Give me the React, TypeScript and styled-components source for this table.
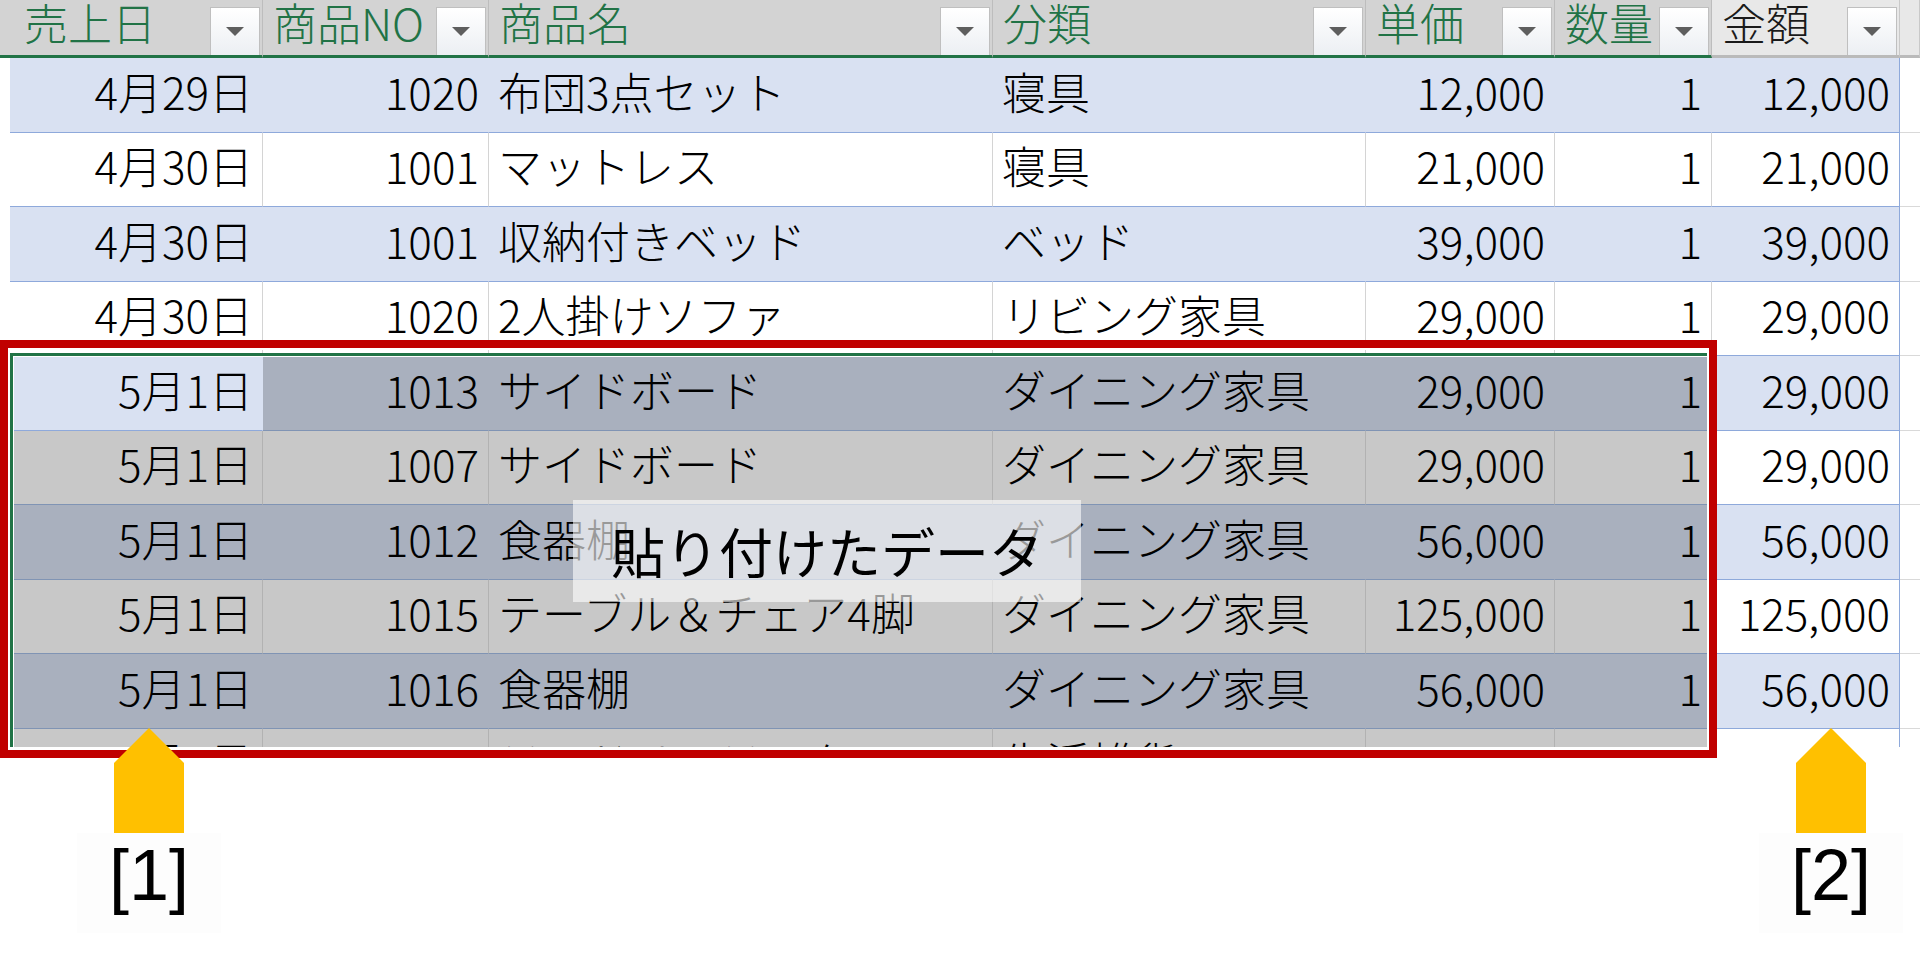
import React from "react";
import styled, { createGlobalStyle } from "styled-components";

const GlobalStyle = createGlobalStyle`
  html, body { margin: 0; padding: 0; background: #ffffff; }
  body { font-family: "Noto Sans CJK JP", "Noto Sans", sans-serif; font-weight: 300; }
  *, *::before, *::after { box-sizing: border-box; }
`;

const COLS = "10px 253px 226px 504px 373px 189px 157px 188px 20px";

type Tone = "band" | "plain" | "bandSel" | "plainSel";

const toneBg: Record<Tone, string> = {
  band: "#d9e1f2",
  plain: "#ffffff",
  bandSel: "#a9b0be",
  plainSel: "#c8c8c8",
};
const toneV: Record<Tone, string> = {
  band: "#d9e1f2",
  plain: "#d4d4d4",
  bandSel: "#a9b0be",
  plainSel: "#b2b2b2",
};

const Page = styled.div`
  position: relative;
  width: 1920px;
  height: 962px;
  overflow: hidden;
  background: #ffffff;
`;

const Sheet = styled.div`
  height: 747px;
  overflow: hidden;
`;

const HeaderRow = styled.div`
  display: grid;
  grid-template-columns: ${COLS};
  height: 58px;
`;

const HeaderCell = styled.div<{ $selected?: boolean; $pad?: number }>`
  display: flex;
  justify-content: space-between;
  align-items: flex-start;
  padding-left: ${(p) => p.$pad ?? 10}px;
  background: ${(p) => (p.$selected ? "#d3d3d3" : "#e8e8e8")};
  border-right: 1px solid ${(p) => (p.$selected ? "#bdbdbd" : "#c9c9c9")};
  border-bottom: 3px solid ${(p) => (p.$selected ? "#217346" : "#bababa")};
  color: ${(p) => (p.$selected ? "#217346" : "#1a1a1a")};
  font-size: 44px;
  line-height: 1;
  white-space: nowrap;
`;

const HeaderLabel = styled.span`
  margin-top: 0;
`;

const FilterButton = styled.span`
  flex: none;
  align-self: flex-end;
  width: 50px;
  height: 48px;
  margin-right: 2px;
  border: 1px solid #bfbfbf;
  border-bottom: none;
  background: linear-gradient(#ffffff, #eceff3);
  display: flex;
  align-items: center;
  justify-content: center;
  &::after {
    content: "";
    border-left: 9px solid transparent;
    border-right: 9px solid transparent;
    border-top: 9px solid #5e5e5e;
  }
`;

const Row = styled.div`
  display: grid;
  grid-template-columns: ${COLS};
  height: 74.5px;
`;

const Gutter = styled.div`
  background: #ffffff;
`;

const Filler = styled.div`
  background: #ffffff;
  border-bottom: 1px solid #d9d9d9;
`;

const Cell = styled.div<{ $tone: Tone; $right?: boolean; $edge?: boolean }>`
  display: flex;
  align-items: center;
  justify-content: ${(p) => (p.$right ? "flex-end" : "flex-start")};
  padding: 0 9px 8px;
  background: ${(p) => toneBg[p.$tone]};
  border-bottom: 1px solid
    ${(p) => (p.$tone === "bandSel" || p.$tone === "plainSel" ? "#8094b4" : "#8ea9db")};
  border-right: 1px solid ${(p) => (p.$edge ? "#8ea9db" : toneV[p.$tone])};
  color: #000000;
  font-size: 44px;
  line-height: 1;
  white-space: nowrap;
  overflow: hidden;
`;

const RedFrame = styled.div`
  position: absolute;
  left: 0;
  top: 340px;
  width: 1717px;
  height: 418px;
  border: 8px solid #c00000;
  box-shadow: inset 0 0 0 2px #ffffff;
  pointer-events: none;
`;

const SelectionEdge = styled.div`
  position: absolute;
  left: 10px;
  top: 353px;
  width: 1700px;
  height: 394px;
  border-top: 3px solid #217346;
  border-left: 3px solid #217346;
  box-shadow: inset 1px 1px 0 #ffffff;
  pointer-events: none;
`;

const PasteLabel = styled.div`
  position: absolute;
  left: 573px;
  top: 500px;
  width: 508px;
  height: 102px;
  display: flex;
  align-items: center;
  justify-content: center;
  background: rgba(255, 255, 255, 0.6);
  color: #000000;
  font-size: 54px;
  font-weight: 400;
  line-height: 1;
  white-space: nowrap;
`;

const Callout = styled.div<{ $left: number }>`
  position: absolute;
  top: 728px;
  left: ${(p) => p.$left}px;
  width: 144px;
  display: flex;
  flex-direction: column;
  align-items: center;
`;

const CalloutLabel = styled.div`
  width: 144px;
  height: 100px;
  padding-top: 6px;
  background: #fdfdfd;
  text-align: center;
  font-family: "Liberation Sans", Arial, sans-serif;
  font-weight: 400;
  font-size: 72px;
  line-height: 1;
  color: #000000;
`;

const Arrow = () => (
  <svg width="70" height="105" viewBox="0 0 70 105" style={{ display: "block" }}>
    <polygon points="35,0 70,35 70,105 0,105 0,35" fill="#ffc000" />
  </svg>
);

type RowData = [string, string, string, string, string, string, string];

const rows: RowData[] = [
  ["4月29日", "1020", "布団3点セット", "寝具", "12,000", "1", "12,000"],
  ["4月30日", "1001", "マットレス", "寝具", "21,000", "1", "21,000"],
  ["4月30日", "1001", "収納付きベッド", "ベッド", "39,000", "1", "39,000"],
  ["4月30日", "1020", "2人掛けソファ", "リビング家具", "29,000", "1", "29,000"],
  ["5月1日", "1013", "サイドボード", "ダイニング家具", "29,000", "1", "29,000"],
  ["5月1日", "1007", "サイドボード", "ダイニング家具", "29,000", "1", "29,000"],
  ["5月1日", "1012", "食器棚", "ダイニング家具", "56,000", "1", "56,000"],
  ["5月1日", "1015", "テーブル＆チェア4脚", "ダイニング家具", "125,000", "1", "125,000"],
  ["5月1日", "1016", "食器棚", "ダイニング家具", "56,000", "1", "56,000"],
  ["5月1日", "1009", "ランドリーラック", "生活雑貨", "8,000", "1", "8,000"],
];

const headers = ["売上日", "商品NO", "商品名", "分類", "単価", "数量", "金額"];
const rightAligned = [true, true, false, false, true, true, true];

export default function App() {
  return (
    <Page>
      <GlobalStyle />
      <Sheet>
        <HeaderRow>
          <HeaderCell $selected />
          {headers.map((h, i) => (
            <HeaderCell key={h} $selected={i < 6} $pad={i === 0 ? 14 : 10}>
              <HeaderLabel>{h}</HeaderLabel>
              <FilterButton />
            </HeaderCell>
          ))}
          <HeaderCell />
        </HeaderRow>
        {rows.map((r, ri) => {
          const band = ri % 2 === 0;
          return (
            <Row key={ri}>
              <Gutter />
              {r.map((v, ci) => {
                const selected = ri >= 4 && ci < 6 && !(ri === 4 && ci === 0);
                const tone: Tone = selected
                  ? band
                    ? "bandSel"
                    : "plainSel"
                  : band
                  ? "band"
                  : "plain";
                return (
                  <Cell key={ci} $tone={tone} $right={rightAligned[ci]} $edge={ci === 6}>
                    {v}
                  </Cell>
                );
              })}
              <Filler />
            </Row>
          );
        })}
      </Sheet>
      <SelectionEdge />
      <PasteLabel>貼り付けたデータ</PasteLabel>
      <RedFrame />
      <Callout $left={77}>
        <Arrow />
        <CalloutLabel>[1]</CalloutLabel>
      </Callout>
      <Callout $left={1759}>
        <Arrow />
        <CalloutLabel>[2]</CalloutLabel>
      </Callout>
    </Page>
  );
}
